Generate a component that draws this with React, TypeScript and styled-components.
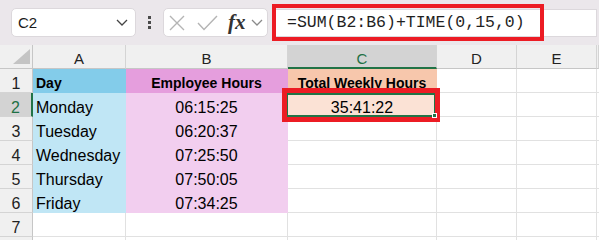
import React from 'react'
import styled, { createGlobalStyle } from 'styled-components'

const GlobalStyle = createGlobalStyle`
  html, body {
    margin: 0;
    padding: 0;
    background: #fff;
  }
  body {
    font-family: "Liberation Sans", Arial, sans-serif;
    color: #000;
  }
`

const Page = styled.div`
  width: 599px;
  height: 240px;
  overflow: hidden;
  background: #fff;
`

const Toolbar = styled.div`
  display: flex;
  align-items: center;
  box-sizing: border-box;
  height: 45px;
  padding: 0 2px 0 11px;
  background: #ebe7eb;
`

const NameBox = styled.div`
  display: flex;
  align-items: center;
  justify-content: space-between;
  box-sizing: border-box;
  width: 125px;
  height: 29px;
  padding: 0 7px 0 6px;
  background: #fff;
  border: 1px solid #dcd8dc;
  border-radius: 5px;
  font-size: 15px;
  color: #1b1b1b;
`

const Grip = styled.div`
  display: flex;
  flex-direction: column;
  align-items: center;
  gap: 2px;
  width: 27px;

  span {
    width: 3px;
    height: 3px;
    background: #4a4a4a;
  }
`

const FxBox = styled.div`
  display: flex;
  align-items: center;
  box-sizing: border-box;
  width: 105px;
  height: 29px;
  padding-left: 5px;
  background: #fff;
  border: 1px solid #dcd8dc;
  border-radius: 5px;
`

const Fx = styled.span`
  margin: 0 5px 0 10px;
  font-family: "Liberation Serif", "Times New Roman", serif;
  font-style: italic;
  font-weight: 700;
  font-size: 21px;
  line-height: 1;
  color: #333;
`

const FormulaBar = styled.div`
  display: flex;
  align-items: center;
  flex: 1;
  box-sizing: border-box;
  height: 28px;
  margin-left: 4px;
  background: #fff;
  border: 1px solid #dcd8dc;
  border-left: none;
`

const FormulaMark = styled.div`
  display: flex;
  align-items: center;
  flex-shrink: 0;
  box-sizing: border-box;
  width: 272px;
  height: 37px;
  padding-left: 11px;
  border: 4.5px solid #ec1c24;
  font-family: "Liberation Mono", "Courier New", monospace;
  font-size: 16.5px;
  color: #1f1f1f;
`

const Sheet = styled.div`
  display: grid;
  grid-template-columns: 33px 93px 162px 149px 80px 80px 2px;
  grid-auto-rows: 24px;
`

const Corner = styled.div`
  display: flex;
  align-items: flex-end;
  justify-content: flex-end;
  box-sizing: border-box;
  padding: 0 2px 4px 0;
  background: #f0f0f0;
  border-right: 1px solid #c6c6c6;
  border-bottom: 1px solid #c6c6c6;
`

const ColHead = styled.div<{ $active?: boolean }>`
  box-sizing: border-box;
  padding-top: 4px;
  text-align: center;
  font-size: 15px;
  line-height: 20px;
  background: ${({ $active }) => ($active ? '#d3d3d3' : '#f0f0f0')};
  color: ${({ $active }) => ($active ? '#1e7145' : '#222')};
  border-right: 1px solid #d4d4d4;
  border-bottom: ${({ $active }) => ($active ? '2px solid #217346' : '1px solid #c6c6c6')};
`

const RowHead = styled.div<{ $active?: boolean }>`
  box-sizing: border-box;
  padding-top: 4px;
  text-align: center;
  font-size: 16px;
  line-height: 21px;
  background: ${({ $active }) => ($active ? '#d3d3d3' : '#f0f0f0')};
  color: ${({ $active }) => ($active ? '#1e7145' : '#222')};
  border-bottom: 1px solid #d4d4d4;
  border-right: ${({ $active }) => ($active ? '2px solid #217346' : '1px solid #c6c6c6')};
`

const Cell = styled.div<{ $fill?: string; $bold?: boolean; $center?: boolean; $selected?: boolean }>`
  position: relative;
  z-index: ${({ $selected }) => ($selected ? 2 : 'auto')};
  box-sizing: border-box;
  padding: 4px 3px 0;
  white-space: nowrap;
  background: ${({ $fill }) => $fill ?? '#fff'};
  border-right: 1px solid ${({ $fill }) => $fill ?? '#e1e1e1'};
  border-bottom: 1px solid ${({ $fill }) => $fill ?? '#e1e1e1'};
  font-size: ${({ $bold }) => ($bold ? '14px' : '16px')};
  font-weight: ${({ $bold }) => ($bold ? 700 : 400)};
  line-height: ${({ $bold }) => ($bold ? '20px' : '21px')};
  text-align: ${({ $center }) => ($center ? 'center' : 'left')};

  ${({ $selected }) =>
    $selected &&
    `
    &::before {
      content: '';
      position: absolute;
      left: -2px;
      top: 0;
      right: 0;
      bottom: -1px;
      border: 2px solid #217346;
    }
    &::after {
      content: '';
      position: absolute;
      right: -1px;
      bottom: -2px;
      width: 3px;
      height: 3px;
      background: #217346;
      border: 1px solid #fff;
    }
  `}
`

const CellMark = styled.span`
  position: absolute;
  left: -6px;
  top: -5px;
  right: -4px;
  bottom: -6px;
  border: 5px solid #ec1c24;
  pointer-events: none;
`

const Chevron = ({ w = 12, color = '#444' }: { w?: number; color?: string }) => (
  <svg width={w} height={7} viewBox="0 0 12 7">
    <polyline points="1,1 6,6 11,1" fill="none" stroke={color} strokeWidth="1.3" />
  </svg>
)

const XIcon = () => (
  <svg width="16" height="16" viewBox="0 0 16 16">
    <path d="M1 1 L15 15 M15 1 L1 15" stroke="#b4b4b4" strokeWidth="1.4" fill="none" />
  </svg>
)

const CheckIcon = () => (
  <svg width="21" height="16" viewBox="0 0 21 16" style={{ marginLeft: 12 }}>
    <polyline points="1,8 7,14.5 20,1" stroke="#b4b4b4" strokeWidth="1.4" fill="none" />
  </svg>
)

type Row = { a?: string; b?: string; c?: string }

const rows: Row[] = [
  { a: 'Day', b: 'Employee Hours', c: 'Total Weekly Hours' },
  { a: 'Monday', b: '06:15:25', c: '35:41:22' },
  { a: 'Tuesday', b: '06:20:37' },
  { a: 'Wednesday', b: '07:25:50' },
  { a: 'Thursday', b: '07:50:05' },
  { a: 'Friday', b: '07:34:25' },
  {},
  {},
]

const fillA = (i: number) => (i === 0 ? '#83ccea' : i <= 5 ? '#c0e6f5' : undefined)
const fillB = (i: number) => (i === 0 ? '#e59edd' : i <= 5 ? '#f2ceef' : undefined)
const fillC = (i: number) => (i === 0 ? '#f7c7ac' : i === 1 ? '#fbe2d5' : undefined)

const App = () => {
  return (
    <Page>
      <GlobalStyle />
      <Toolbar>
        <NameBox>
          C2
          <Chevron />
        </NameBox>
        <Grip>
          <span />
          <span />
          <span />
        </Grip>
        <FxBox>
          <XIcon />
          <CheckIcon />
          <Fx>fx</Fx>
          <Chevron color="#8a8a8a" />
        </FxBox>
        <FormulaBar>
          <FormulaMark>=SUM(B2:B6)+TIME(0,15,0)</FormulaMark>
        </FormulaBar>
      </Toolbar>

      <Sheet>
        <Corner>
          <svg width="17" height="15" viewBox="0 0 17 15">
            <polygon points="17,0 17,15 0,15" fill="#c4c4c4" />
          </svg>
        </Corner>
        {['A', 'B', 'C', 'D', 'E', ''].map((l) => (
          <ColHead key={l || 'F'} $active={l === 'C'}>
            {l}
          </ColHead>
        ))}

        {rows.map((r, i) => (
          <React.Fragment key={i}>
            {/* row 8 sits below the visible area, only its top edge shows */}
            <RowHead $active={i === 1}>{i < 7 ? i + 1 : ''}</RowHead>
            <Cell $fill={fillA(i)} $bold={i === 0}>
              {r.a}
            </Cell>
            <Cell $fill={fillB(i)} $bold={i === 0} $center>
              {r.b}
            </Cell>
            <Cell $fill={fillC(i)} $bold={i === 0} $center $selected={i === 1}>
              {r.c}
              {i === 1 && <CellMark />}
            </Cell>
            <Cell />
            <Cell />
            <Cell />
          </React.Fragment>
        ))}
      </Sheet>
    </Page>
  )
}

export default App
